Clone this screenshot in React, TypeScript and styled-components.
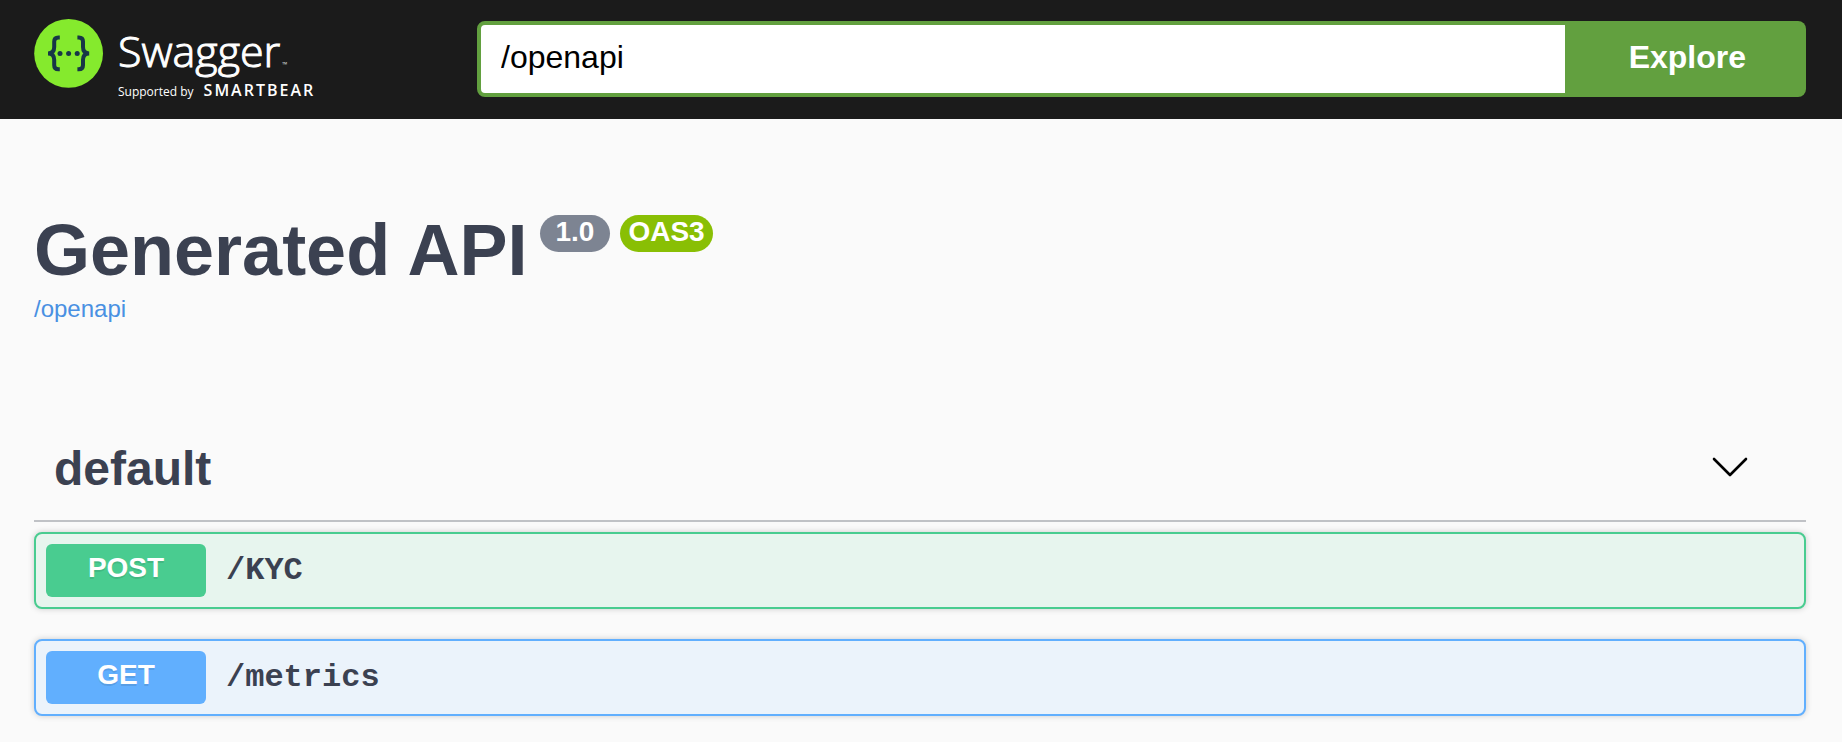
import React, { useState } from "react";
import styled, { createGlobalStyle } from "styled-components";

const sans = `"Liberation Sans", Arial, Helvetica, sans-serif`;
const brand = `"Open Sans", "Noto Sans", sans-serif`;
const mono = `"Liberation Mono", "Courier New", monospace`;
const ink = "#3b4151";

const GlobalStyle = createGlobalStyle`
  *, *::before, *::after { box-sizing: border-box; }
  body {
    margin: 0;
    background: #fafafa;
    color: ${ink};
    font-family: ${sans};
  }
`;

const Topbar = styled.header`
  display: flex;
  align-items: flex-start;
  padding: 19px 36px 22px 34px;
  background: #1b1b1b;
`;

const LogoLink = styled.a`
  display: flex;
  flex: 1 1 0;
  align-items: flex-start;
  gap: 14px;
  min-width: 0;
  color: #fff;
  font-family: ${brand};
  text-decoration: none;
  white-space: nowrap;
`;

const LogoMark = styled.svg`
  flex: none;
  width: 70px;
  height: 70px;
`;

const LogoText = styled.span`
  display: flex;
  flex-direction: column;
  gap: 8px;
  height: 76px;
  padding-top: 10px;
`;

const Wordmark = styled.span`
  font-size: 43px;
  font-weight: 300;
  line-height: 44px;
  -webkit-text-stroke: 1px #fff;
`;

const Trademark = styled.small`
  margin-left: 2px;
  font-size: 7px;
  line-height: 8px;
  -webkit-text-stroke: 0;
`;

const Support = styled.span`
  display: flex;
  align-items: baseline;
  gap: 10px;
  font-size: 12px;
  line-height: 18px;
`;

const Sponsor = styled.span`
  font-size: 16px;
  font-weight: 600;
  letter-spacing: 2px;
`;

const UrlForm = styled.form`
  display: flex;
  flex: 3 1 0;
  height: 76px;
  min-width: 0;
  margin-top: 2px;
`;

const UrlInput = styled.input`
  flex: 1;
  min-width: 0;
  margin: 0;
  padding: 0 20px 4px;
  border: 4px solid #62a03f;
  border-radius: 8px 0 0 8px;
  outline: none;
  background: #fff;
  color: #000;
  font: 400 32px ${sans};
`;

const ExploreButton = styled.button`
  padding: 0 60px 4px;
  border: 0;
  border-radius: 0 8px 8px 0;
  background: #62a03f;
  color: #fff;
  font: 700 32px ${sans};
  cursor: pointer;
`;

const Content = styled.main`
  padding: 91px 36px 26px 34px;
`;

const TitleRow = styled.div`
  display: flex;
  align-items: flex-start;
  gap: 10px;
`;

const Title = styled.h1`
  margin: 0 2px 0 0;
  font-size: 72px;
  line-height: 80px;
`;

const Badge = styled.span<{ $color: string; $pad: number }>`
  margin-top: 5px;
  padding: 0 ${(p) => p.$pad}px 4px;
  border-radius: 20px;
  background: ${(p) => p.$color};
  color: #fff;
  font-size: 28px;
  font-weight: 700;
  line-height: 33px;
`;

const SpecLink = styled.a`
  display: inline-block;
  margin-top: 5px;
  color: #4990e2;
  font-size: 24px;
  line-height: 28px;
  text-decoration: none;
`;

const TagSection = styled.section`
  margin-top: 90px;
`;

const TagHeading = styled.h2`
  margin: 0 0 10px;
  border-bottom: 2px solid rgba(59, 65, 81, 0.3);
`;

const TagToggle = styled.button`
  display: flex;
  align-items: center;
  justify-content: space-between;
  width: 100%;
  padding: 28px 58px 23px 20px;
  border: 0;
  background: none;
  color: ${ink};
  font: 700 48px/56px ${sans};
  cursor: pointer;
`;

const Chevron = styled.svg<{ $open: boolean }>`
  width: 36px;
  height: 24px;
  transform: rotate(${(p) => (p.$open ? 0 : -90)}deg);
`;

const Operations = styled.div`
  display: flex;
  flex-direction: column;
  gap: 30px;
`;

const Operation = styled.button<{ $color: string; $tint: string }>`
  display: flex;
  align-items: center;
  gap: 20px;
  width: 100%;
  padding: 10px;
  border: 2px solid ${(p) => p.$color};
  border-radius: 8px;
  background: ${(p) => p.$tint};
  box-shadow: 0 0 6px rgba(0, 0, 0, 0.19);
  text-align: left;
  cursor: pointer;
`;

const Method = styled.span<{ $color: string }>`
  flex: none;
  width: 160px;
  padding: 7px 0 13px;
  border-radius: 6px;
  background: ${(p) => p.$color};
  color: #fff;
  font: 700 28px/33px ${sans};
  text-align: center;
  text-shadow: 0 2px 0 rgba(0, 0, 0, 0.1);
`;

const Path = styled.span`
  color: ${ink};
  font: 700 32px/36px ${mono};
`;

const operations = [
  { method: "POST", path: "/KYC", color: "#49cc90", tint: "#e7f5ee" },
  { method: "GET", path: "/metrics", color: "#61affe", tint: "#ebf3fb" },
];

function SwaggerMark() {
  const brace =
    "M25.8 18.5 H24.4 C21.4 18.5 20.2 20 20.2 22.6 V28 C20.2 31.6 18.4 34.4 14 34.4 C18.4 34.4 20.2 37.2 20.2 40.8 V46.2 C20.2 48.8 21.4 50.3 24.4 50.3 H25.8";
  return (
    <LogoMark viewBox="0 0 70 70" aria-hidden="true">
      <circle cx="34.6" cy="34.4" r="34.4" fill="#85ea2d" />
      <g fill="none" stroke="#173647" strokeWidth="4">
        <path d={brace} />
        <path d={brace} transform="translate(69.2 0) scale(-1 1)" />
      </g>
      <g fill="#173647">
        <circle cx="26" cy="34.4" r="2.5" />
        <circle cx="34.6" cy="34.4" r="2.5" />
        <circle cx="43.2" cy="34.4" r="2.5" />
      </g>
    </LogoMark>
  );
}

export default function App() {
  const [url, setUrl] = useState("/openapi");
  const [open, setOpen] = useState(true);

  return (
    <>
      <GlobalStyle />
      <Topbar>
        <LogoLink href="#">
          <SwaggerMark />
          <LogoText>
            <Wordmark>
              Swagger<Trademark>™</Trademark>
            </Wordmark>
            <Support>
              Supported by <Sponsor>SMARTBEAR</Sponsor>
            </Support>
          </LogoText>
        </LogoLink>
        <UrlForm onSubmit={(e) => e.preventDefault()}>
          <UrlInput
            type="text"
            aria-label="API definition URL"
            value={url}
            onChange={(e) => setUrl(e.target.value)}
          />
          <ExploreButton type="submit">Explore</ExploreButton>
        </UrlForm>
      </Topbar>
      <Content>
        <TitleRow>
          <Title>Generated API</Title>
          <Badge $color="#7d8492" $pad={16}>1.0</Badge>
          <Badge $color="#89bf04" $pad={8}>OAS3</Badge>
        </TitleRow>
        <SpecLink href="/openapi">/openapi</SpecLink>
        <TagSection>
          <TagHeading>
            <TagToggle type="button" aria-expanded={open} onClick={() => setOpen(!open)}>
              default
              <Chevron $open={open} viewBox="0 0 36 24" aria-hidden="true">
                <path
                  d="M2 2 L18 18 L34 2"
                  fill="none"
                  stroke="#000"
                  strokeWidth="2.6"
                  strokeLinecap="round"
                  strokeLinejoin="round"
                />
              </Chevron>
            </TagToggle>
          </TagHeading>
          {open && (
            <Operations>
              {operations.map((op) => (
                <Operation key={op.path} type="button" $color={op.color} $tint={op.tint}>
                  <Method $color={op.color}>{op.method}</Method>
                  <Path>{op.path}</Path>
                </Operation>
              ))}
            </Operations>
          )}
        </TagSection>
      </Content>
    </>
  );
}
